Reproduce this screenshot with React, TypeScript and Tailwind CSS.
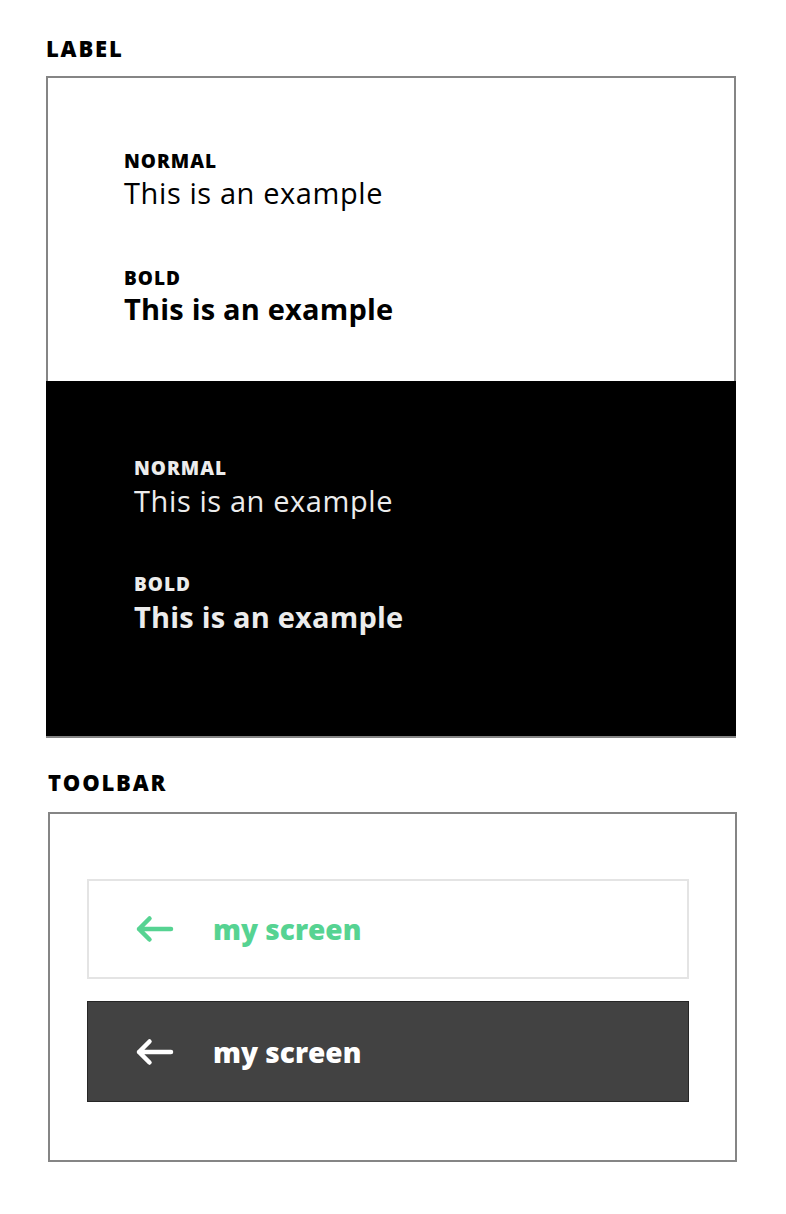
import React from 'react';

const font = { fontFamily: '"Open Sans", Lato, sans-serif' };

const BackArrow: React.FC<{ color: string }> = ({ color }) => (
  <svg width="40" height="30" viewBox="0 0 40 30" fill="none">
    <path d="M4 15H36M4 15L14.5 4.5M4 15L14.5 25.5" stroke={color} strokeWidth="4.5" strokeLinecap="round" strokeLinejoin="round" />
  </svg>
);

const Sample: React.FC<{ dark?: boolean }> = ({ dark }) => {
  if (dark) {
    return (
      <div className="text-[#ececec]">
        <div className="text-[19px] font-extrabold leading-none tracking-[1px]">NORMAL</div>
        <div className="mt-[8px] text-[29px] font-normal leading-none tracking-[0.6px]">This is an example</div>
        <div className="mt-[60px] text-[19px] font-extrabold leading-none tracking-[1px]">BOLD</div>
        <div className="mt-[8px] text-[29px] font-bold leading-none tracking-[0.2px]">This is an example</div>
      </div>
    );
  }
  return (
    <div className="text-black">
      <div className="text-[19px] font-extrabold leading-none tracking-[1px]">NORMAL</div>
      <div className="mt-[7px] text-[29px] font-normal leading-none tracking-[0.6px]">This is an example</div>
      <div className="mt-[62px] text-[19px] font-extrabold leading-none tracking-[1px]">BOLD</div>
      <div className="mt-[6px] text-[29px] font-bold leading-none tracking-[0.2px]">This is an example</div>
    </div>
  );
};

const Toolbar: React.FC<{ dark?: boolean }> = ({ dark }) => (
  <div
    className={
      dark
        ? 'flex h-[101px] w-[602px] items-center border border-[#262626] bg-[#424242] pl-[47px]'
        : 'flex h-[100px] w-[602px] items-center border-2 border-[#e4e4e4] bg-white pl-[46px]'
    }
  >
    <BackArrow color={dark ? '#ffffff' : '#56d392'} />
    <span className={`ml-[38px] text-[28px] font-extrabold leading-none ${dark ? 'text-white' : 'text-[#56d392]'}`}>
      my screen
    </span>
  </div>
);

export default function App() {
  return (
    <div className="min-h-[1214px] w-[786px] bg-white pl-[46px] pt-[37px]" style={font}>
      <h2 className="text-[22px] font-extrabold leading-none tracking-[1.8px] text-black">LABEL</h2>

      <div className="mt-[17px] w-[690px]">
        <div className="border-x-2 border-t-2 border-[#858585] bg-white pb-[58px] pl-[76px] pt-[74px]">
          <Sample />
        </div>
        <div className="border-b-2 border-[#858585] bg-black pb-[105px] pl-[88px] pt-[78px]">
          <Sample dark />
        </div>
      </div>

      <h2 className="ml-[2px] mt-[33px] text-[22px] font-extrabold leading-none tracking-[1.8px] text-black">TOOLBAR</h2>

      <div className="ml-[2px] mt-[19px] w-[689px] border-2 border-[#858585] pl-[37px] pb-[58px] pt-[65px]">
        <Toolbar />
        <div className="mt-[22px]">
          <Toolbar dark />
        </div>
      </div>
    </div>
  );
}
